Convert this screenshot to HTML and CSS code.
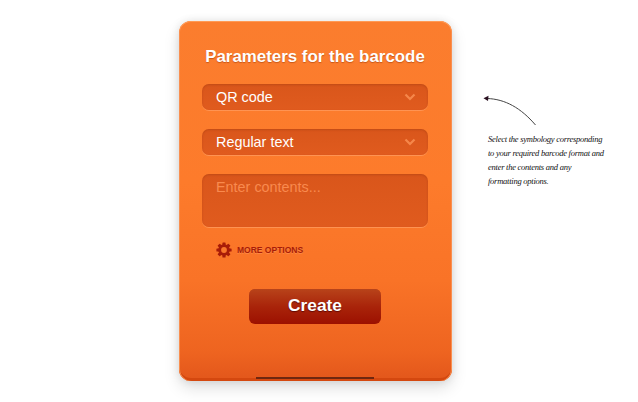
FILE: index.html
```html
<!DOCTYPE html>
<html lang="en">
<head>
<meta charset="utf-8">
<title>Parameters for the barcode</title>
<link rel="stylesheet" href="styles.css">
</head>
<body>
<main class="page">
  <form class="panel">
    <h1 class="title">Parameters for the barcode</h1>
    <div class="field select"><span>QR code</span>
      <svg class="chev" viewBox="0 0 12 8" width="12" height="8"><path d="M1.500 1.500 6 6l4.500-4.500" fill="none" stroke="#f5874a" stroke-width="2.200"/></svg>
    </div>
    <div class="field select"><span>Regular text</span>
      <svg class="chev" viewBox="0 0 12 8" width="12" height="8"><path d="M1.500 1.500 6 6l4.500-4.500" fill="none" stroke="#f5874a" stroke-width="2.200"/></svg>
    </div>
    <div class="field area">Enter contents...</div>
    <div class="more">
      <svg class="gear" viewBox="0 0 16 16" width="16" height="16">
        <g fill="#a81c08">
          <rect x="6.400" y="0.400" width="3.200" height="15.200" rx=".6"/>
          <rect x="6.400" y="0.400" width="3.200" height="15.200" rx=".6" transform="rotate(45 8 8)"/>
          <rect x="6.400" y="0.400" width="3.200" height="15.200" rx=".6" transform="rotate(90 8 8)"/>
          <rect x="6.400" y="0.400" width="3.200" height="15.200" rx=".6" transform="rotate(135 8 8)"/>
          <circle cx="8" cy="8" r="5.800"/>
        </g>
        <circle cx="8" cy="8" r="2.900" fill="#f9772c"/>
      </svg>
      <span>MORE OPTIONS</span>
    </div>
    <div class="actions"><button type="button" class="create">Create</button></div>
    <div class="foot"></div>
  </form>
  <aside class="help">
    <svg class="arrow" viewBox="0 0 56 32" width="56" height="32">
      <path d="M4 3.500C22 4 38 13 52.500 30" fill="none" stroke="#444" stroke-width="1"/>
      <path d="M0.500 3.300 5.500 0.800 5 6z" fill="#2a1020"/>
    </svg>
    <p class="note">
      <span class="line">Select the symbology corresponding</span>
      <span class="line">to your required barcode format and</span>
      <span class="line">enter the contents and any</span>
      <span class="line">formatting options.</span>
    </p>
  </aside>
</main>
</body>
</html>
```
FILE: styles.css
```css
* { box-sizing: border-box; }
html, body { margin: 0; background: #fff; }
.page {
  width: 638px;
  height: 402px;
  overflow: hidden;
  display: flex;
  align-items: flex-start;
  padding: 21px 0 0 179px;
}
.panel {
  position: relative;
  flex: none;
  width: 273px;
  height: 360px;
  border-radius: 12px;
  padding: 25px 23px 0;
  background: linear-gradient(#fb7d2e 0, #fd7b2b 45%, #f97327 72%, #ee6420 92%, #e2561b 100%);
  box-shadow:
    inset 0 1px 0 #ff9a55,
    inset 1px 0 0 #f98f50,
    inset -1px 0 0 #f98f50,
    inset 0 -3px 0 #d4480f,
    0 7px 16px rgba(0, 0, 0, .13),
    0 0 8px rgba(0, 0, 0, .1);
  font-family: "Liberation Sans", Arial, sans-serif;
}
.title {
  margin: 0 0 16px;
  padding-right: 1px;
  height: 22px;
  line-height: 22px;
  font-size: 16.900px;
  font-weight: 700;
  text-align: center;
  color: #fff;
  white-space: nowrap;
  text-shadow: 0 1px 1px rgba(150, 50, 0, .5);
}
.field {
  width: 226px;
  border-radius: 7px;
  background: linear-gradient(#d9561b, #e05b1e);
  box-shadow:
    inset 0 1px 2px rgba(120, 40, 0, .25),
    0 1px 0 rgba(255, 154, 92, .8);
  font-size: 14.400px;
}
.select {
  height: 26px;
  margin-bottom: 19px;
  padding: 0 12px 0 14px;
  display: flex;
  align-items: center;
  justify-content: space-between;
  color: #fff;
}
.area {
  height: 53px;
  padding: 5px 14px;
  line-height: 17px;
  color: #f98a4e;
}
.more {
  display: flex;
  align-items: center;
  gap: 5px;
  margin: 15px 0 0 14px;
  height: 16px;
  font-size: 8.500px;
  font-weight: 700;
  color: #a81c08;
  text-shadow: 0 1px 0 rgba(255, 170, 110, .4);
}
.actions {
  margin-top: 31px;
  padding-left: 47px;
}
.create {
  display: block;
  width: 132px;
  height: 35px;
  padding: 0 0 2px;
  border: 0;
  border-radius: 6px;
  background: linear-gradient(#b8431a, #a9240a 50%, #9c1000);
  box-shadow: inset 0 1px 0 #b8431a;
  color: #fff;
  font: 700 17.300px "Liberation Sans", Arial, sans-serif;
  text-shadow: 0 1px 1px rgba(70, 0, 0, .7);
}
.foot {
  position: absolute;
  left: 77px;
  bottom: 2px;
  width: 118px;
  height: 2px;
  background: #6e2710;
}
.help {
  flex: none;
  width: 130px;
  margin-left: 31px;
  padding-top: 74px;
}
.arrow { display: block; }
.note {
  margin: 5px 0 0 5px;
  font: italic 8.500px/14px "Liberation Serif", "Times New Roman", serif;
  letter-spacing: -.25px;
  color: #111;
}
.line {
  display: block;
  white-space: nowrap;
}
```
